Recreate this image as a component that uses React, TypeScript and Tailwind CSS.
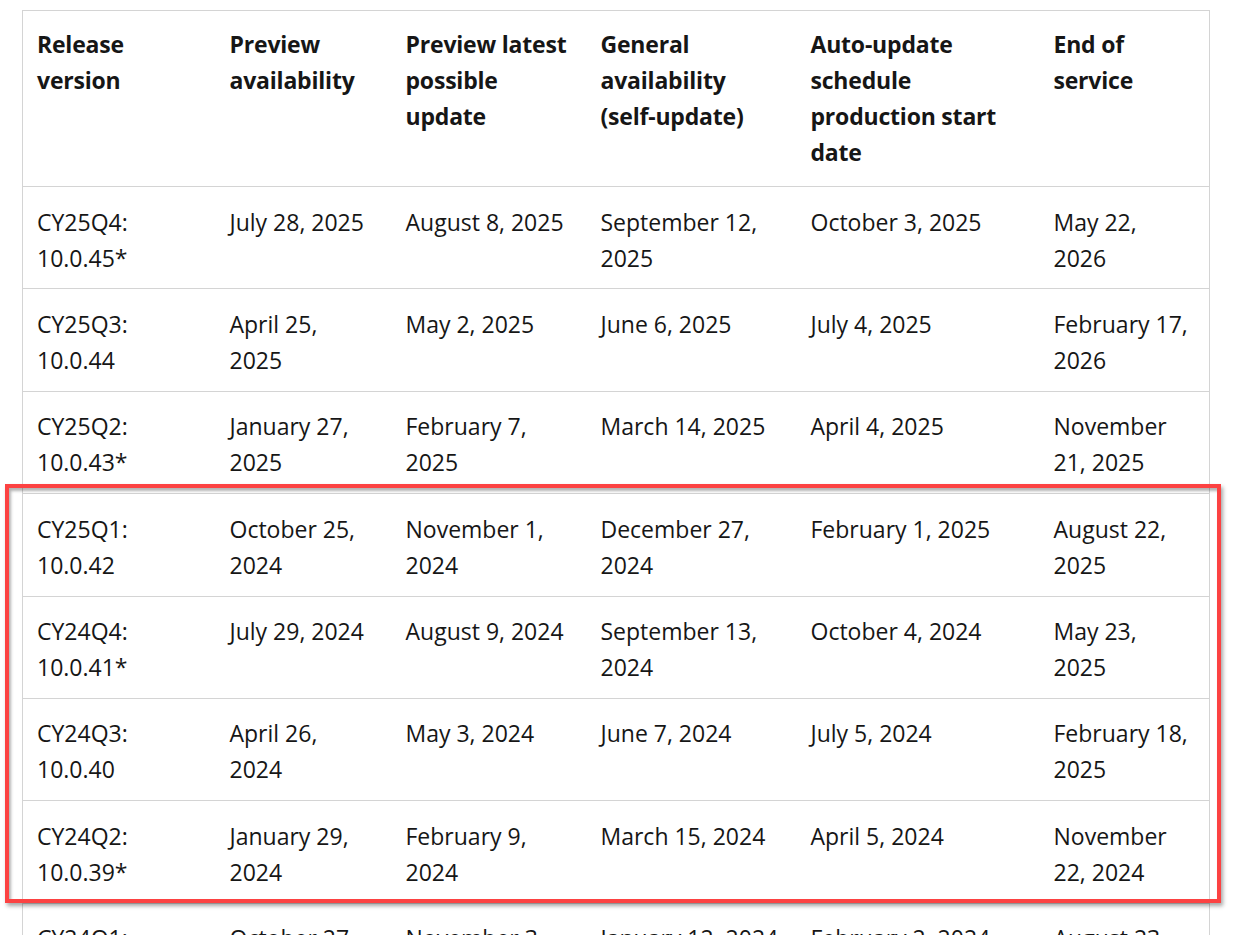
const columns = [
  { w: 'w-[193px]', head: ['Release', 'version'] },
  { w: 'w-[176px]', head: ['Preview', 'availability'] },
  { w: 'w-[195px]', head: ['Preview latest', 'possible', 'update'] },
  { w: 'w-[210px]', head: ['General', 'availability', '(self-update)'] },
  { w: 'w-[243px]', head: ['Auto-update', 'schedule', 'production start', 'date'] },
  { w: 'w-[170px]', head: ['End of', 'service'] },
];

// each cell is a list of lines, wrapped the way the page wraps them
const rows: string[][][] = [
  [['CY25Q4:', '10.0.45*'], ['July 28, 2025'], ['August 8, 2025'], ['September 12,', '2025'], ['October 3, 2025'], ['May 22,', '2026']],
  [['CY25Q3:', '10.0.44'], ['April 25,', '2025'], ['May 2, 2025'], ['June 6, 2025'], ['July 4, 2025'], ['February 17,', '2026']],
  [['CY25Q2:', '10.0.43*'], ['January 27,', '2025'], ['February 7,', '2025'], ['March 14, 2025'], ['April 4, 2025'], ['November', '21, 2025']],
  [['CY25Q1:', '10.0.42'], ['October 25,', '2024'], ['November 1,', '2024'], ['December 27,', '2024'], ['February 1, 2025'], ['August 22,', '2025']],
  [['CY24Q4:', '10.0.41*'], ['July 29, 2024'], ['August 9, 2024'], ['September 13,', '2024'], ['October 4, 2024'], ['May 23,', '2025']],
  [['CY24Q3:', '10.0.40'], ['April 26,', '2024'], ['May 3, 2024'], ['June 7, 2024'], ['July 5, 2024'], ['February 18,', '2025']],
  [['CY24Q2:', '10.0.39*'], ['January 29,', '2024'], ['February 9,', '2024'], ['March 15, 2024'], ['April 5, 2024'], ['November', '22, 2024']],
  [['CY24Q1:', '10.0.38'], ['October 27,', '2023'], ['November 3,', '2023'], ['January 12, 2024'], ['February 2, 2024'], ['August 23,', '2024']],
];

function Lines({ lines }: { lines: string[] }) {
  return (
    <>
      {lines.map((l) => (
        <div key={l} className="whitespace-nowrap">
          {l}
        </div>
      ))}
    </>
  );
}

export default function App() {
  return (
    <div className="relative h-[935px] overflow-hidden bg-white font-['Open_Sans',sans-serif] text-[23px] leading-[36px] text-[#161616]">
      <div className="pl-[22px] pt-[10px]">
        <table className="w-[1187px] table-fixed border-collapse border border-[#d4d4d4]">
          <thead>
            <tr className="border-b border-[#d4d4d4]">
              {columns.map((c) => (
                <th key={c.head.join(' ')} className={`${c.w} pl-[14px] pr-[16px] pt-[15px] pb-[16px] text-left align-top font-bold tracking-[-0.2px]`}>
                  <Lines lines={c.head} />
                </th>
              ))}
            </tr>
          </thead>
          <tbody>
            {rows.map((r) => (
              <tr key={r[0].join(' ')} className="border-b border-[#d4d4d4]">
                {r.map((cell, i) => (
                  <td key={i} className="pl-[14px] pr-[16px] pt-[16.5px] pb-[12.9px] align-top">
                    <Lines lines={cell} />
                  </td>
                ))}
              </tr>
            ))}
          </tbody>
        </table>
      </div>

      {/* highlight box drawn over the table */}
      <div className="pointer-events-none absolute left-[5px] top-[484px] h-[419px] w-[1216px] border-[4px] border-[#fc4242] shadow-[2px_3px_4px_rgba(0,0,0,0.35),inset_2px_3px_3px_rgba(0,0,0,0.3)]" />
    </div>
  );
}
